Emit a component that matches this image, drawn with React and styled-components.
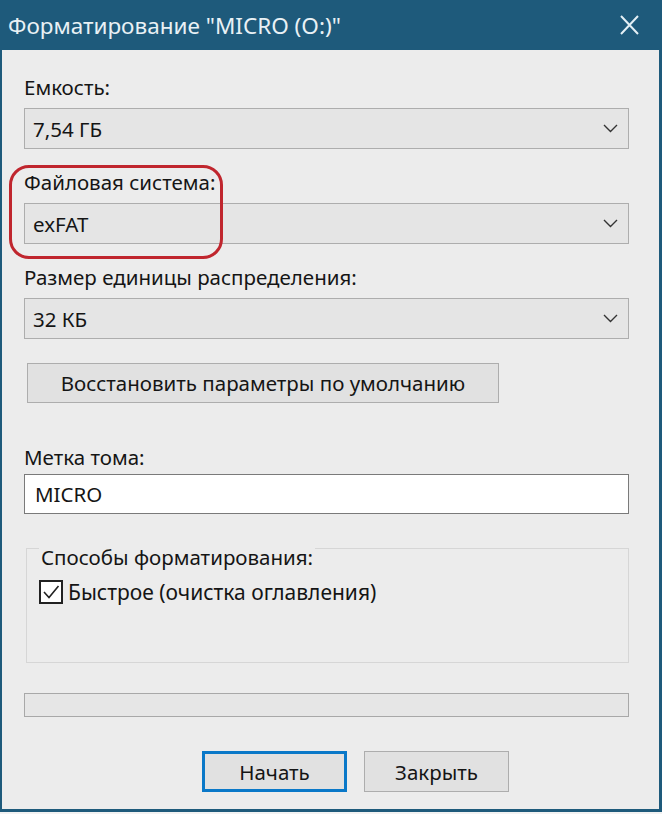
import styled, { createGlobalStyle } from "styled-components";

const GlobalStyle = createGlobalStyle`
  html, body {
    margin: 0;
    padding: 0;
    background: #f2f2f2;
  }
  * {
    box-sizing: border-box;
  }
`;

const FONT = `"Noto Sans", "Open Sans", sans-serif`;
const TEXT_SIZE = "20.5px";

const Window = styled.div`
  width: 662px;
  height: 812px;
  display: flex;
  flex-direction: column;
  background: #1e5a7b;
  padding: 0 3px 3px 2px;
  font-family: ${FONT};
  color: #151515;
`;

const TitleBar = styled.div`
  height: 50px;
  flex: none;
  display: flex;
  align-items: center;
  justify-content: space-between;
  padding: 0 20px 0 6px;
`;

const Title = styled.div`
  font-size: 22.5px;
  color: #e9f1f5;
`;

const Body = styled.div`
  flex: 1;
  background: #ececec;
  display: flex;
  flex-direction: column;
  padding: 25px 30px 0 22px;
`;

const Field = styled.div`
  position: relative;
  display: flex;
  flex-direction: column;
  margin-top: ${(p) => p.$top || 0}px;
`;

const Label = styled.div`
  font-size: ${TEXT_SIZE};
  line-height: 24px;
  margin-bottom: ${(p) => p.$gap ?? 9}px;
`;

const Combo = styled.div`
  height: 41px;
  border: 1px solid #adadad;
  background: #e5e5e5;
  display: flex;
  align-items: center;
  justify-content: space-between;
  padding: 0 10px 0 8px;
  font-size: ${TEXT_SIZE};
`;

const Highlight = styled.div`
  position: absolute;
  left: -15px;
  top: -5px;
  width: 214px;
  height: 94px;
  border: 3px solid #c0262e;
  border-radius: 20px;
  pointer-events: none;
`;

const Button = styled.button`
  height: ${(p) => p.$h || 41}px;
  width: ${(p) => p.$w}px;
  margin: ${(p) => p.$margin || 0};
  align-self: flex-start;
  font-family: ${FONT};
  font-size: ${TEXT_SIZE};
  color: #151515;
  background: #e1e1e1;
  border: ${(p) => (p.$primary ? "3px solid #0a78c8" : "1px solid #adadad")};
  padding: 0;
`;

const TextBox = styled.div`
  height: 40px;
  border: 1px solid #7a7a7a;
  background: #ffffff;
  display: flex;
  align-items: center;
  padding-left: 10px;
  font-size: ${TEXT_SIZE};
`;

const Group = styled.fieldset`
  margin: 13px 0 0 2px;
  height: 136px;
  border: 1px solid #d6d6d6;
  padding: 0 0 0 12px;
`;

const Legend = styled.legend`
  font-size: ${TEXT_SIZE};
  line-height: 24px;
  padding: 18px 2px 0;
  margin-left: 0;
`;

const Check = styled.label`
  display: flex;
  align-items: center;
  gap: 5px;
  margin-top: 9px;
  font-size: 21px;
`;

const CheckBox = styled.span`
  width: 24px;
  height: 24px;
  border: 2px solid #222;
  background: #fff;
  display: flex;
  align-items: center;
  justify-content: center;
`;

const Progress = styled.div`
  height: 24px;
  margin-top: 30px;
  border: 1px solid #a8a8a8;
  background: #e6e6e6;
`;

const Footer = styled.div`
  display: flex;
  justify-content: flex-end;
  gap: 17px;
  padding-right: 120px;
  margin-top: 34px;
`;

const Chevron = () => (
  <svg width="15" height="9" viewBox="0 0 15 9">
    <path d="M1 1 L7.5 7.5 L14 1" fill="none" stroke="#333" strokeWidth="1.4" />
  </svg>
);

const CloseIcon = () => (
  <svg width="19" height="20" viewBox="0 0 19 20">
    <path d="M1 1 L18 19 M18 1 L1 19" stroke="#e3eff5" strokeWidth="2" />
  </svg>
);

const App = () => {
  return (
    <Window>
      <GlobalStyle />
      <TitleBar>
        <Title>Форматирование "MICRO (O:)"</Title>
        <CloseIcon />
      </TitleBar>
      <Body>
        <Field>
          <Label>Емкость:</Label>
          <Combo>
            7,54 ГБ
            <Chevron />
          </Combo>
        </Field>
        <Field $top={21}>
          <Label>Файловая система:</Label>
          <Combo>
            exFAT
            <Chevron />
          </Combo>
          <Highlight />
        </Field>
        <Field $top={21}>
          <Label>Размер единицы распределения:</Label>
          <Combo>
            32 КБ
            <Chevron />
          </Combo>
        </Field>
        <Button $w={472} $h={40} $margin="24px 0 0 3px">
          Восстановить параметры по умолчанию
        </Button>
        <Field $top={42}>
          <Label $gap={5}>Метка тома:</Label>
          <TextBox>MICRO</TextBox>
        </Field>
        <Group>
          <Legend>Способы форматирования:</Legend>
          <Check>
            <CheckBox>
              <svg width="18" height="16" viewBox="0 0 18 16">
                <path d="M2 8 L7 13.5 L16.5 2" fill="none" stroke="#222" strokeWidth="1.6" />
              </svg>
            </CheckBox>
            Быстрое (очистка оглавления)
          </Check>
        </Group>
        <Progress />
        <Footer>
          <Button $w={145} $primary>Начать</Button>
          <Button $w={145}>Закрыть</Button>
        </Footer>
      </Body>
    </Window>
  );
};

export default App;
